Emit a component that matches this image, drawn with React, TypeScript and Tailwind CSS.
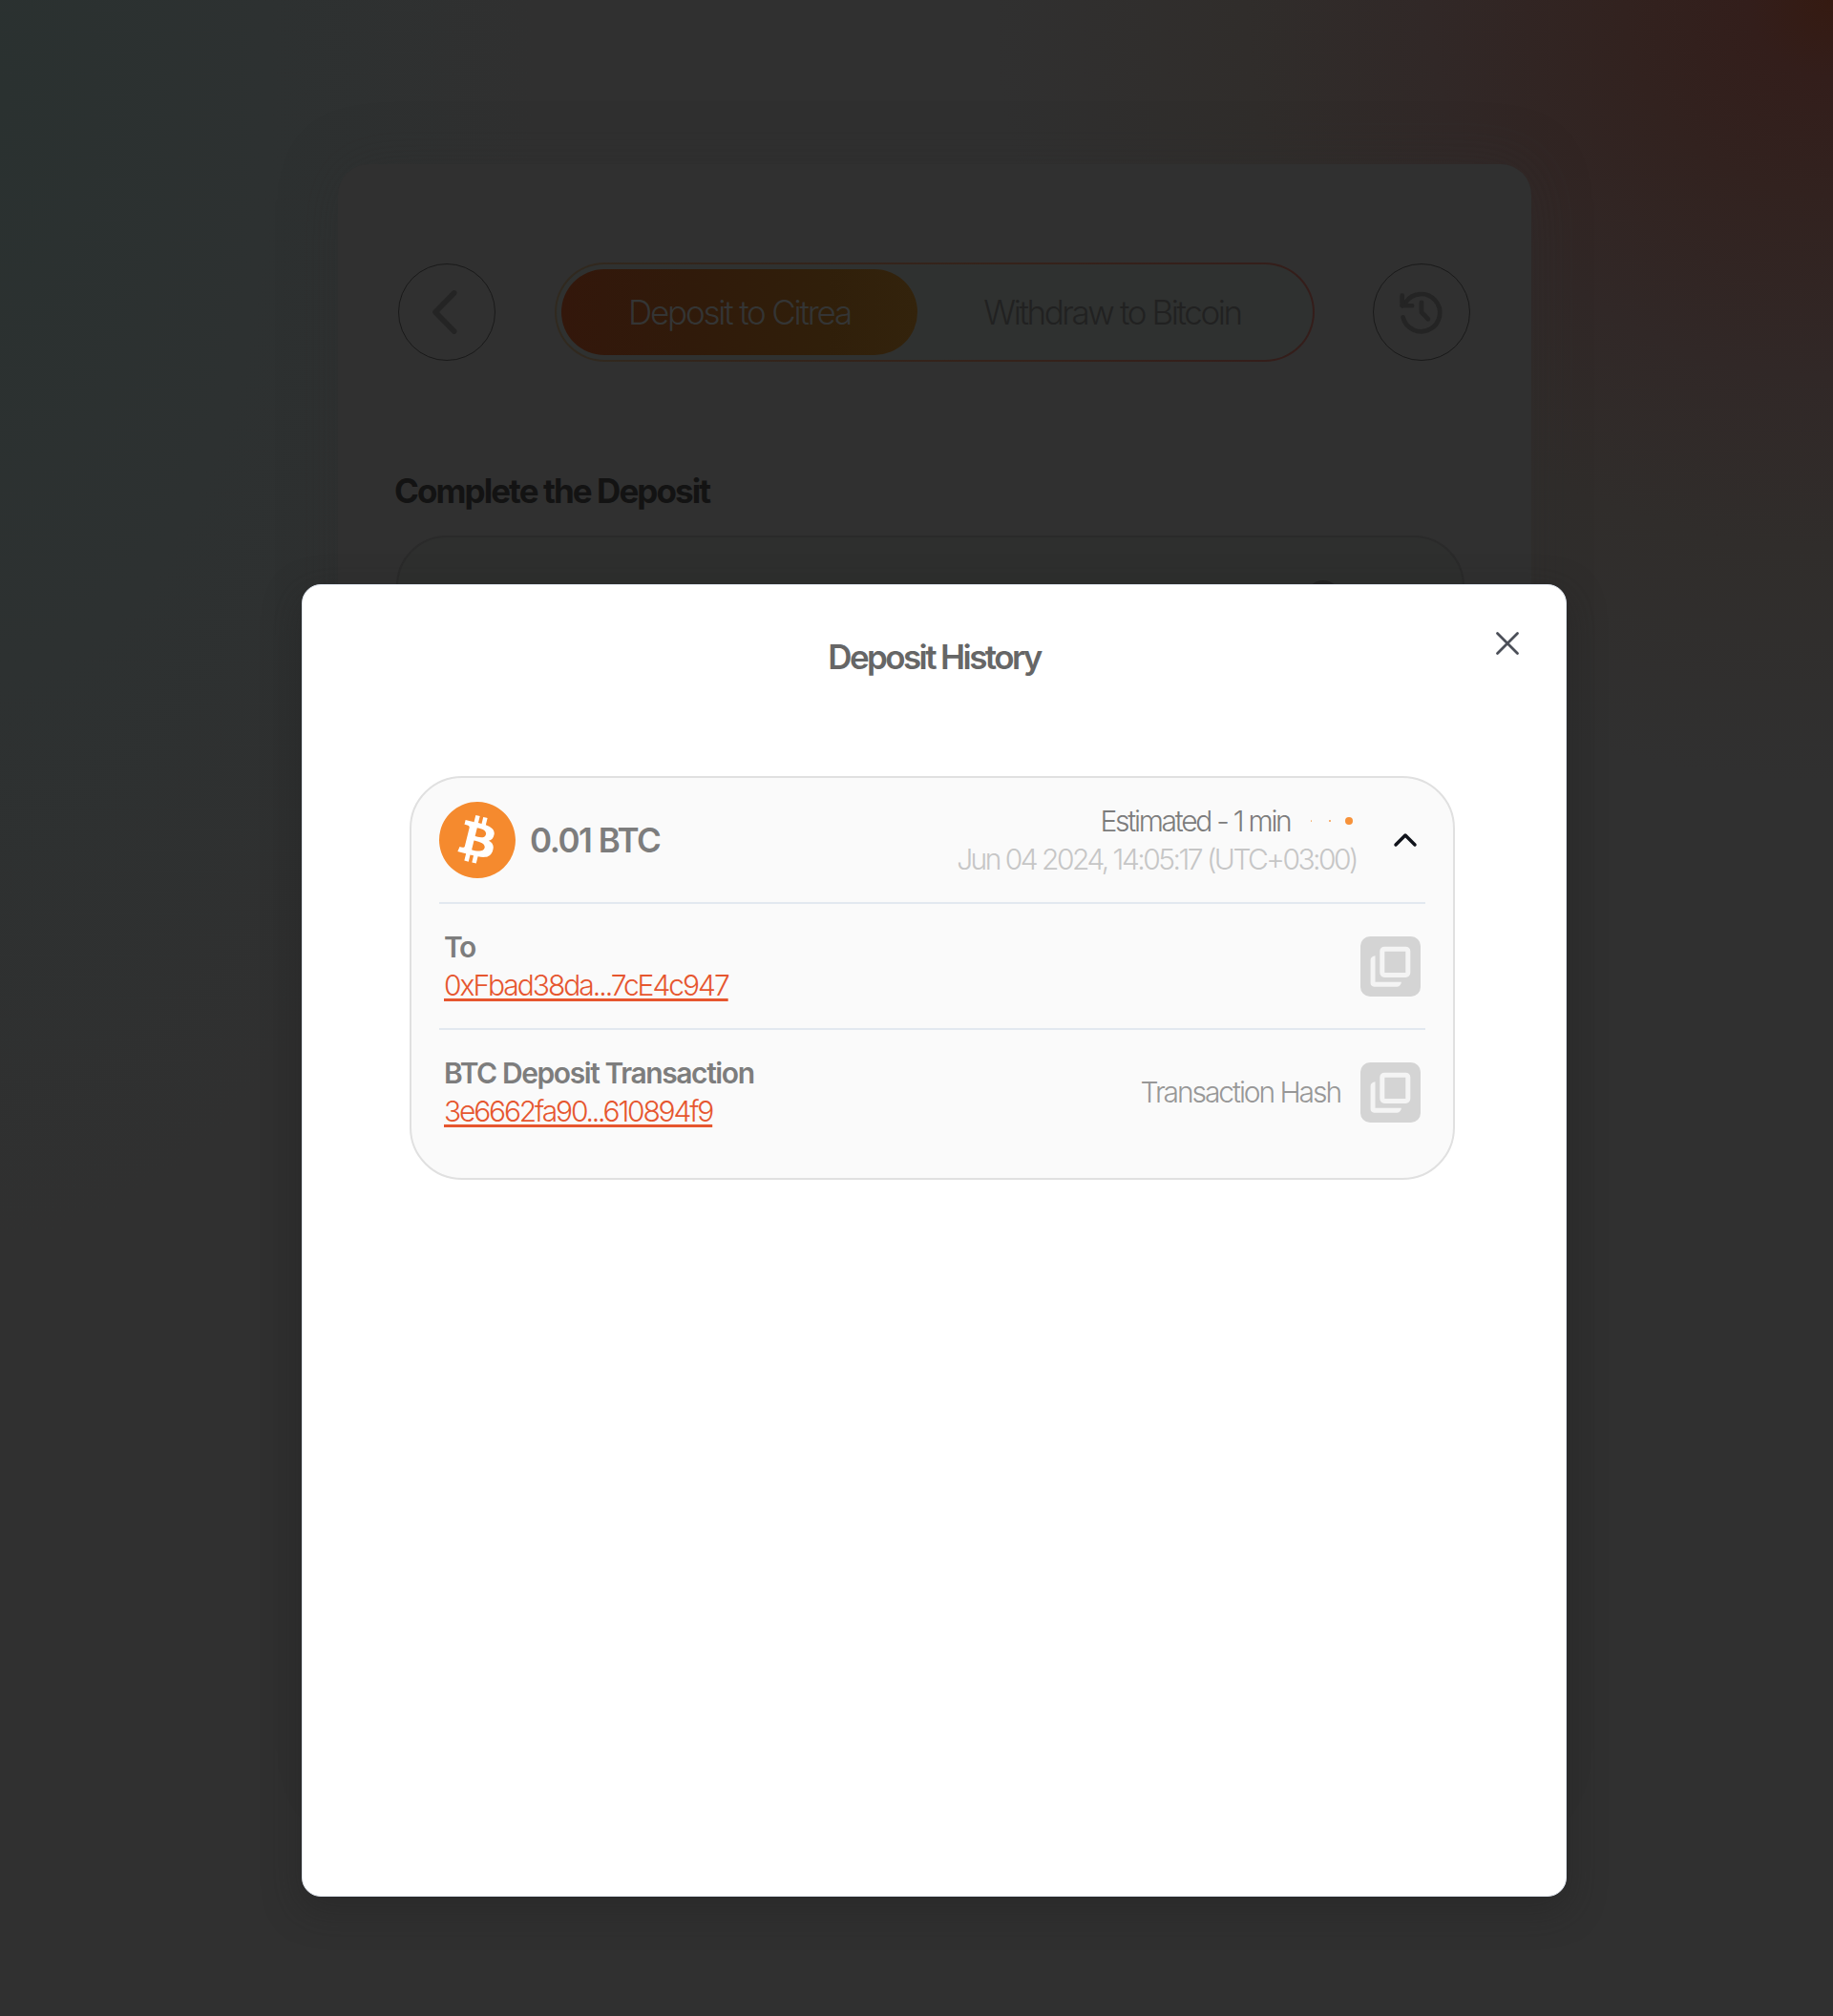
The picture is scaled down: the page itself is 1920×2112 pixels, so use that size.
import type { ReactNode } from "react";
import { SiBitcoin } from "react-icons/si";

function RoundButton({ label, children }: { label: string; children: ReactNode }) {
  return (
    <button
      aria-label={label}
      className="flex h-[102px] w-[102px] shrink-0 items-center justify-center rounded-full border border-[#191919]"
    >
      {children}
    </button>
  );
}

function BackIcon() {
  return (
    <svg width="102" height="102" viewBox="0 0 102 102" fill="none" stroke="#242424" strokeWidth="5.8" strokeLinecap="round" strokeLinejoin="round">
      <path d="M58.8 30.5 38.8 51 58.8 71.5" />
    </svg>
  );
}

function HistoryIcon() {
  return (
    <svg width="102" height="102" viewBox="0 0 102 102" fill="none" stroke="#242424" strokeWidth="4.8" strokeLinecap="round" strokeLinejoin="round">
      <path d="M31.2 56.5a20 20 0 1 0 2.8-16L30.5 44" />
      <path d="M30.3 33.3v10.8h10.6" />
      <path d="M51 40.6v10.6l7 7.2" />
    </svg>
  );
}

function CopyButton() {
  return (
    <button aria-label="Copy" className="flex h-[63px] w-[63px] shrink-0 rounded-[10px] bg-[#d4d4d4]">
      <svg width="63" height="63" viewBox="0 0 63 63" fill="none">
        <rect x="22.8" y="13.2" width="27" height="27.2" rx="2.3" stroke="#f4f4f4" strokeWidth="5" />
        <path
          d="M10.6 24.5c0-2.2 2-4 4.9-4.300v27.600h27.400c-.3 2.900-2.100 4.900-4.300 4.900H14.200c-2.100 0-3.600-1.500-3.600-3.600z"
          fill="#f4f4f4"
        />
      </svg>
    </button>
  );
}

function DetailRow({ title, link, tracking, note }: { title: ReactNode; link: string; tracking: string; note?: string }) {
  return (
    <div className="flex h-[132px] items-center border-t-2 border-[#e2e8f0] pl-[5px] pr-[5px]">
      <div className="flex-1 leading-[40px]">
        <div className="font-semibold tracking-[-1.41px] text-[#7d7d7d]">{title}</div>
        <div className="flex">
          <a className={`font-light text-[#e6562f] underline decoration-[2.7px] underline-offset-[3px] ${tracking}`}>{link}</a>
        </div>
      </div>
      {note && <span className="mr-[21px] font-light tracking-[-2.08px] text-[#979797]">{note}</span>}
      <CopyButton />
    </div>
  );
}

function BridgePage() {
  return (
    <div className="h-[2112px] overflow-hidden bg-[#303030] bg-[radial-gradient(ellipse_880px_820px_at_1920px_0px,#351a11_0%,#331e1b_10%,#32221f_25%,#312827_48%,#302d2b_70%,transparent_100%),radial-gradient(ellipse_560px_1200px_at_0px_100px,#2a3130_0%,#2d3131_50%,transparent_100%)] pl-[354px] pt-[172px]">
      <div className="h-[1700px] w-[1250px] rounded-[32px] bg-[#303030] px-[63px] pt-[103px] shadow-[0_0_60px_0px_rgba(42,42,42,0.35)]">
        <div className="flex h-[104px] items-center">
          <RoundButton label="Back">
            <BackIcon />
          </RoundButton>
          <div className="ml-[62px] h-[104px] w-[796px] rounded-[52px] bg-[linear-gradient(90deg,#30291f_0%,#33251b_20%,#35221a_60%,#341d1a_100%)] p-[2px]">
            <div className="flex h-full items-center rounded-[50px] bg-[#2f3130] pl-[5px] text-[35px] font-light leading-[40px]">
              <div className="flex h-[90px] w-[373px] items-center justify-center rounded-[45px] bg-[linear-gradient(90deg,#33170b_0%,#301a0a_35%,#301f0a_75%,#33230c_100%)] tracking-[-2.2px] text-[#343535]">
                Deposit to Citrea
              </div>
              <div className="flex flex-1 items-center justify-center pr-[6px] tracking-[-2.4px] text-[#212121]">Withdraw to Bitcoin</div>
            </div>
          </div>
          <div className="ml-[61px]">
            <RoundButton label="History">
              <HistoryIcon />
            </RoundButton>
          </div>
        </div>
        <h2 className="-ml-[4px] mt-[115px] text-[35px] font-bold leading-[40px] tracking-[-1.93px] text-[#131313]">Complete the Deposit</h2>
        <div className="-ml-[2px] mt-[27px] flex h-[300px] w-[1119px] items-start justify-end rounded-[53px] border-2 border-[#2a2a2a] bg-[#2e2f2e] pr-[128px] pt-[45px]">
          <div className="h-[36px] w-[36px] rounded-full bg-[#232323]" />
        </div>
      </div>
    </div>
  );
}

function HistoryModal() {
  return (
    <div className="absolute left-0 top-0 flex h-[2112px] w-full items-start pl-[316px] pt-[612px]">
      <div className="relative flex h-[1375px] w-[1325px] flex-col rounded-[20px] border-[1.5px] border-[#dfe5ee] bg-white shadow-[0_12px_36px_4px_rgba(32,32,32,0.35)]">
        <h1 className="mt-[55px] text-center text-[35px] font-semibold leading-[40px] tracking-[-2.6px] text-[#666666]">Deposit History</h1>
        <svg className="absolute right-[48px] top-[48px]" width="26" height="26" viewBox="0 0 26 26" fill="none" stroke="#4b4f58" strokeWidth="2.8" strokeLinecap="round">
          <path d="M2.5 2.5 23.5 23.5M23.5 2.5 2.5 23.5" />
        </svg>
        <div className="ml-[112px] mt-[105px] h-[423px] w-[1095px] rounded-[55px] border-2 border-[#e0e0e0] bg-[#fafafa] px-[29px] text-[30px]">
          <div className="flex h-[130px] items-center">
            <span className="relative flex h-[80px] w-[80px] items-center justify-center">
              <span className="absolute h-[60px] w-[60px] rounded-full bg-white" />
              <SiBitcoin className="relative text-[#f58a2e]" size={80} />
            </span>
            <span className="ml-[15px] text-[35px] font-semibold leading-[40px] tracking-[-1.45px] text-[#7d7d7d]">0.01 BTC</span>
            <div className="ml-auto flex flex-col items-end font-light leading-[40px]">
              <div className="flex items-center text-[#7c7c7c]">
                <span className="tracking-[-2.27px]">Estimated - 1 min</span>
                <span className="ml-[21px] mr-[4px] flex items-center">
                  <span className="h-[1.5px] w-[1.5px] rounded-full bg-[#f7b070]" />
                  <span className="ml-[18px] h-[2px] w-[2px] rounded-full bg-[#f79a48]" />
                  <span className="ml-[15px] h-[8px] w-[8px] rounded-full bg-[#f7923a]" />
                </span>
              </div>
              <div className="tracking-[-2.52px] text-[#c6c6c6]">Jun 04 2024, 14:05:17 (UTC+03:00)</div>
            </div>
            <svg className="ml-[38px] mr-[8px]" width="26" height="16" viewBox="0 0 26 16" fill="none" stroke="#10131b" strokeWidth="3.5" strokeLinecap="round" strokeLinejoin="round">
              <path d="M3 13 13 3 23 13" />
            </svg>
          </div>
          <DetailRow title="To" link="0xFbad38da...7cE4c947" tracking="tracking-[-2.03px]" />
          <DetailRow title="BTC Deposit Transaction" link="3e6662fa90...610894f9" tracking="tracking-[-2.18px]" note="Transaction Hash" />
        </div>
      </div>
    </div>
  );
}

export default function App() {
  return (
    <div className="relative w-[1920px] font-['Inter',sans-serif]">
      <BridgePage />
      <HistoryModal />
    </div>
  );
}
